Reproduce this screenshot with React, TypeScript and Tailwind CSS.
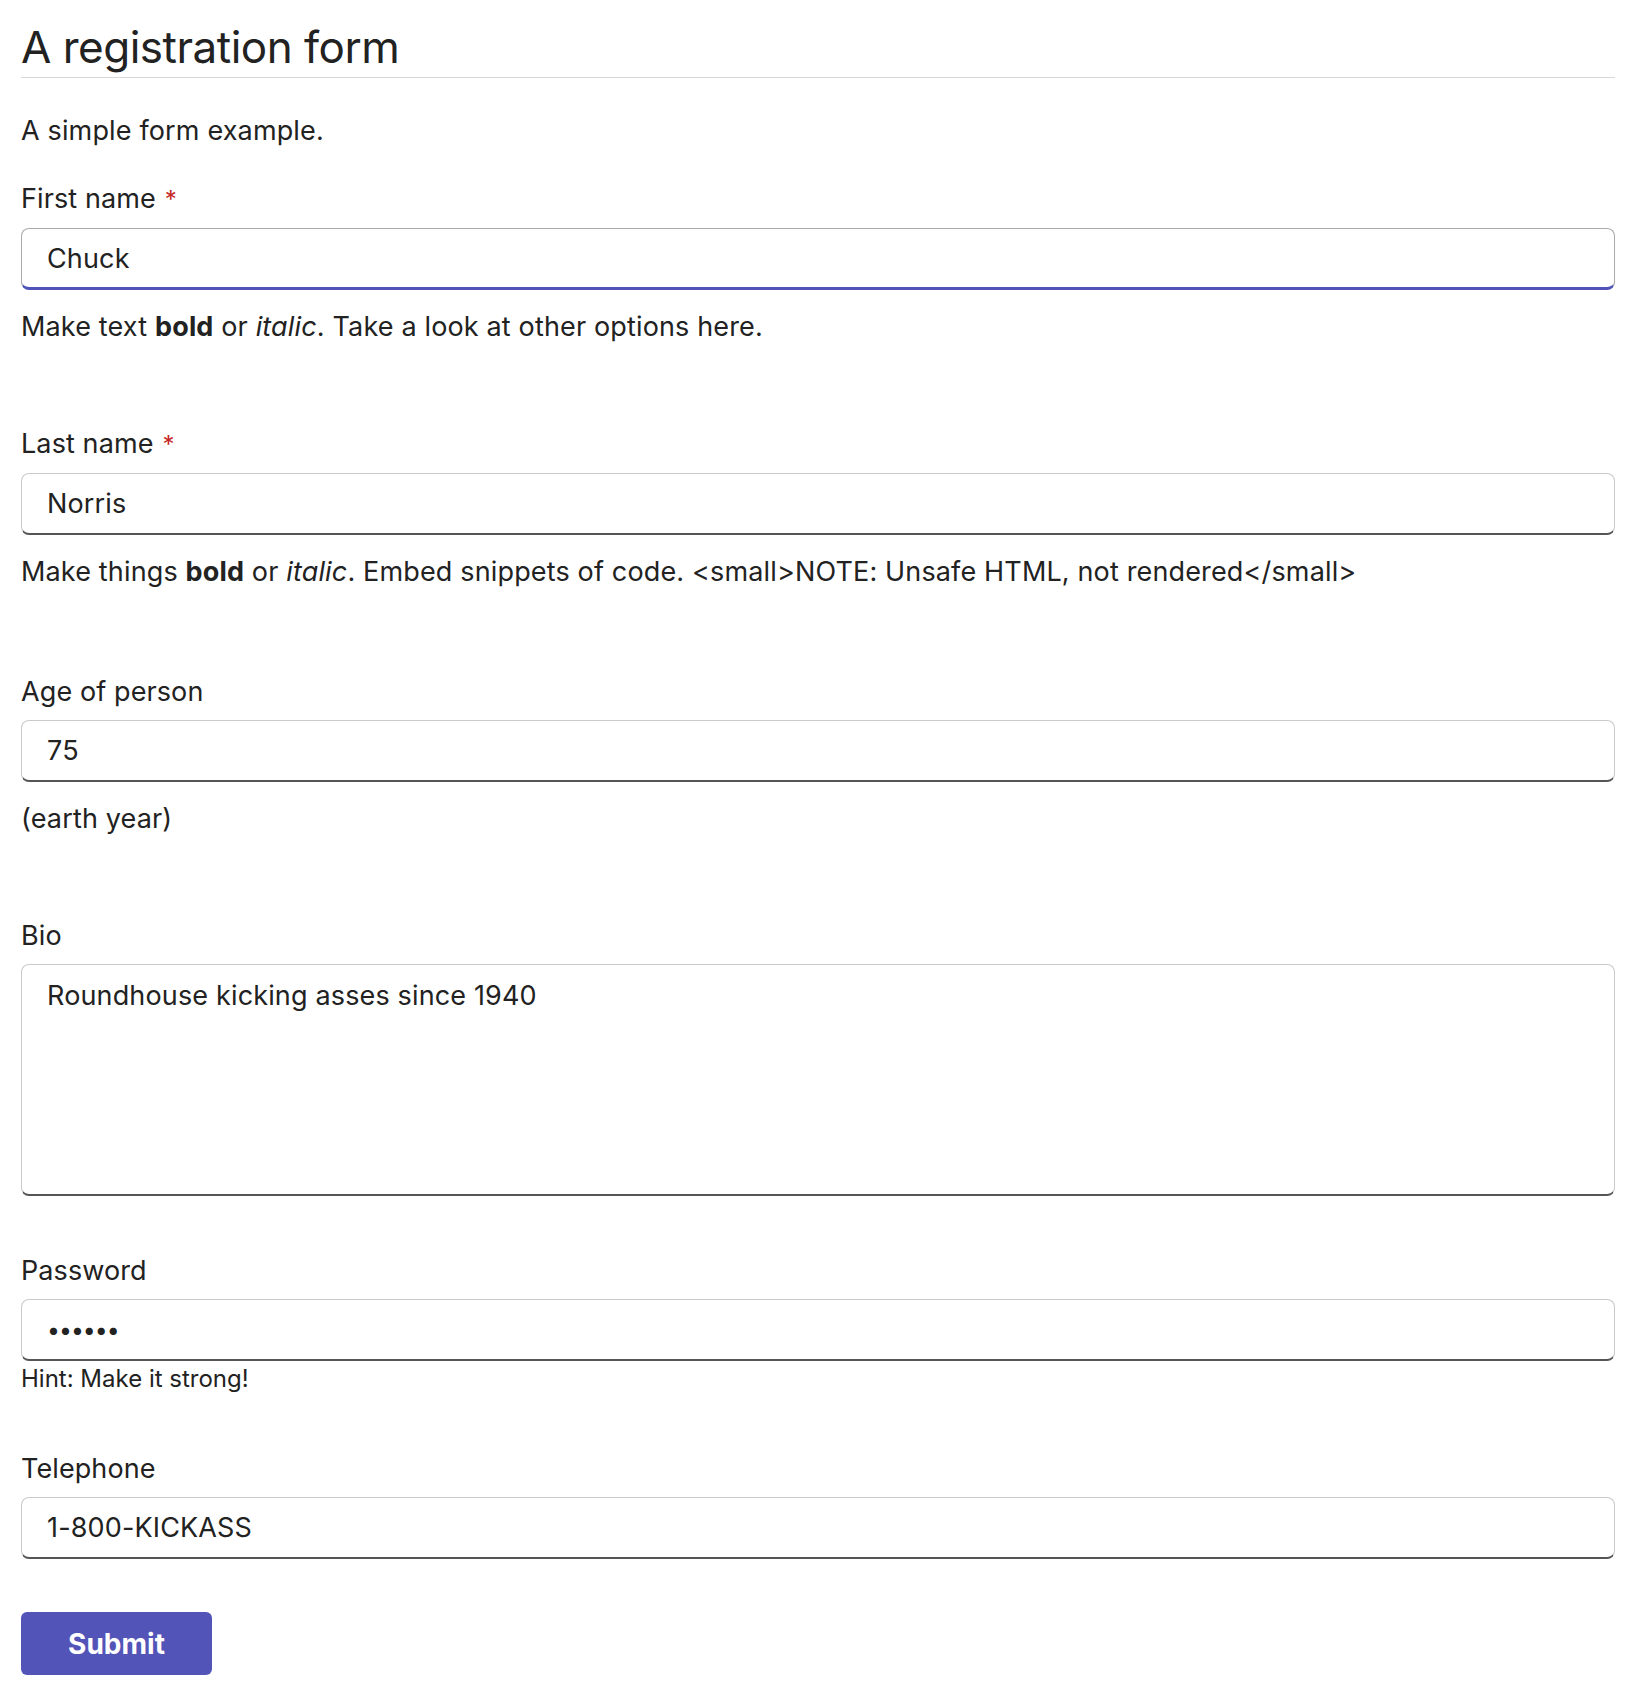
import React, { useState } from "react";

const font = { fontFamily: "Inter, 'Noto Sans', sans-serif" };

interface FieldProps {
	label: string;
	required?: boolean;
	className?: string;
	children: React.ReactNode;
}

const Field = ({ label, required, className = "mb-[55px]", children }: FieldProps) => (
	<div className={className}>
		<label className="block text-[27px] leading-[39px] mb-[9px] tracking-[0.1px]">
			{label}
			{required && <span className="text-[#c62828] ml-[9px] text-[24px]">*</span>}
		</label>
		{children}
	</div>
);

const inputCls =
	"block w-full h-[62px] px-[25px] rounded-[8px] border border-[#cacaca] border-b-2 border-b-[#555] bg-white text-[27px] tracking-[0.15px] text-[#222] outline-none";

const helpCls = "mt-[17px] text-[27px] leading-[39px] tracking-[0.15px]";

const App = () => {
	const [first, setFirst] = useState("Chuck");
	const [last, setLast] = useState("Norris");
	const [age, setAge] = useState("75");
	const [bio, setBio] = useState("Roundhouse kicking asses since 1940");
	const [pw, setPw] = useState("123456");
	const [tel, setTel] = useState("1-800-KICKASS");

	return (
		<div className="bg-white min-h-screen px-[21px] text-[#222]" style={font}>
			<h1 className="pt-[17px] text-[44px] leading-[60px] font-normal border-b border-[#d8d8d8] tracking-[-0.5px]">
				A registration form
			</h1>
			<p className="mt-[33px] mb-[29px] text-[27px] leading-[39px] tracking-[0.15px]">A simple form example.</p>

			<form onSubmit={(e) => e.preventDefault()}>
				<Field label="First name" required className="mb-[78px]">
					<input
						autoFocus
						value={first}
						onChange={(e) => setFirst(e.target.value)}
						className="block w-full h-[62px] px-[25px] rounded-[8px] border border-[#aaa] border-b-[3px] border-b-[#5053b8] bg-white text-[27px] tracking-[0.15px] outline-none caret-[#222]"
					/>
					<p className={helpCls}>
						Make text <b>bold</b> or <i>italic</i>. Take a look at other options here.
					</p>
				</Field>

				<Field label="Last name" required className="mb-[81px]">
					<input value={last} onChange={(e) => setLast(e.target.value)} className={inputCls} />
					<p className={helpCls}>
						Make things <b>bold</b> or <i>italic</i>. Embed snippets of <code style={font}>code</code>.{" "}
						&lt;small&gt;NOTE: Unsafe HTML, not rendered&lt;/small&gt;
					</p>
				</Field>

				<Field label="Age of person" className="mb-[78px]">
					<input value={age} onChange={(e) => setAge(e.target.value)} className={inputCls} />
					<p className={helpCls}>(earth year)</p>
				</Field>

				<Field label="Bio">
					<textarea
						value={bio}
						onChange={(e) => setBio(e.target.value)}
						className="block w-full h-[232px] px-[25px] pt-[13px] rounded-[8px] border border-[#cacaca] border-b-2 border-b-[#555] bg-white text-[27px] tracking-[0.15px] leading-[36px] outline-none resize-none"
					/>
				</Field>

				<Field label="Password">
					<input
						type="password"
						value={pw}
						onChange={(e) => setPw(e.target.value)}
						className="block w-full h-[62px] px-[25px] rounded-[8px] border border-[#cacaca] border-b-2 border-b-[#555] bg-white text-[23px] tracking-[-1px] text-[#222] outline-none"
					/>
					<p className="mt-[3px] text-[24px] leading-[30px]">Hint: Make it strong!</p>
				</Field>

				<Field label="Telephone">
					<input value={tel} onChange={(e) => setTel(e.target.value)} className={inputCls} />
				</Field>

				<button
					type="submit"
					className="w-[191px] h-[63px] rounded-[6px] bg-[#5254b8] text-white text-[28px] font-bold -mt-[2px]"
				>
					Submit
				</button>
			</form>
		</div>
	);
};

export default App;
